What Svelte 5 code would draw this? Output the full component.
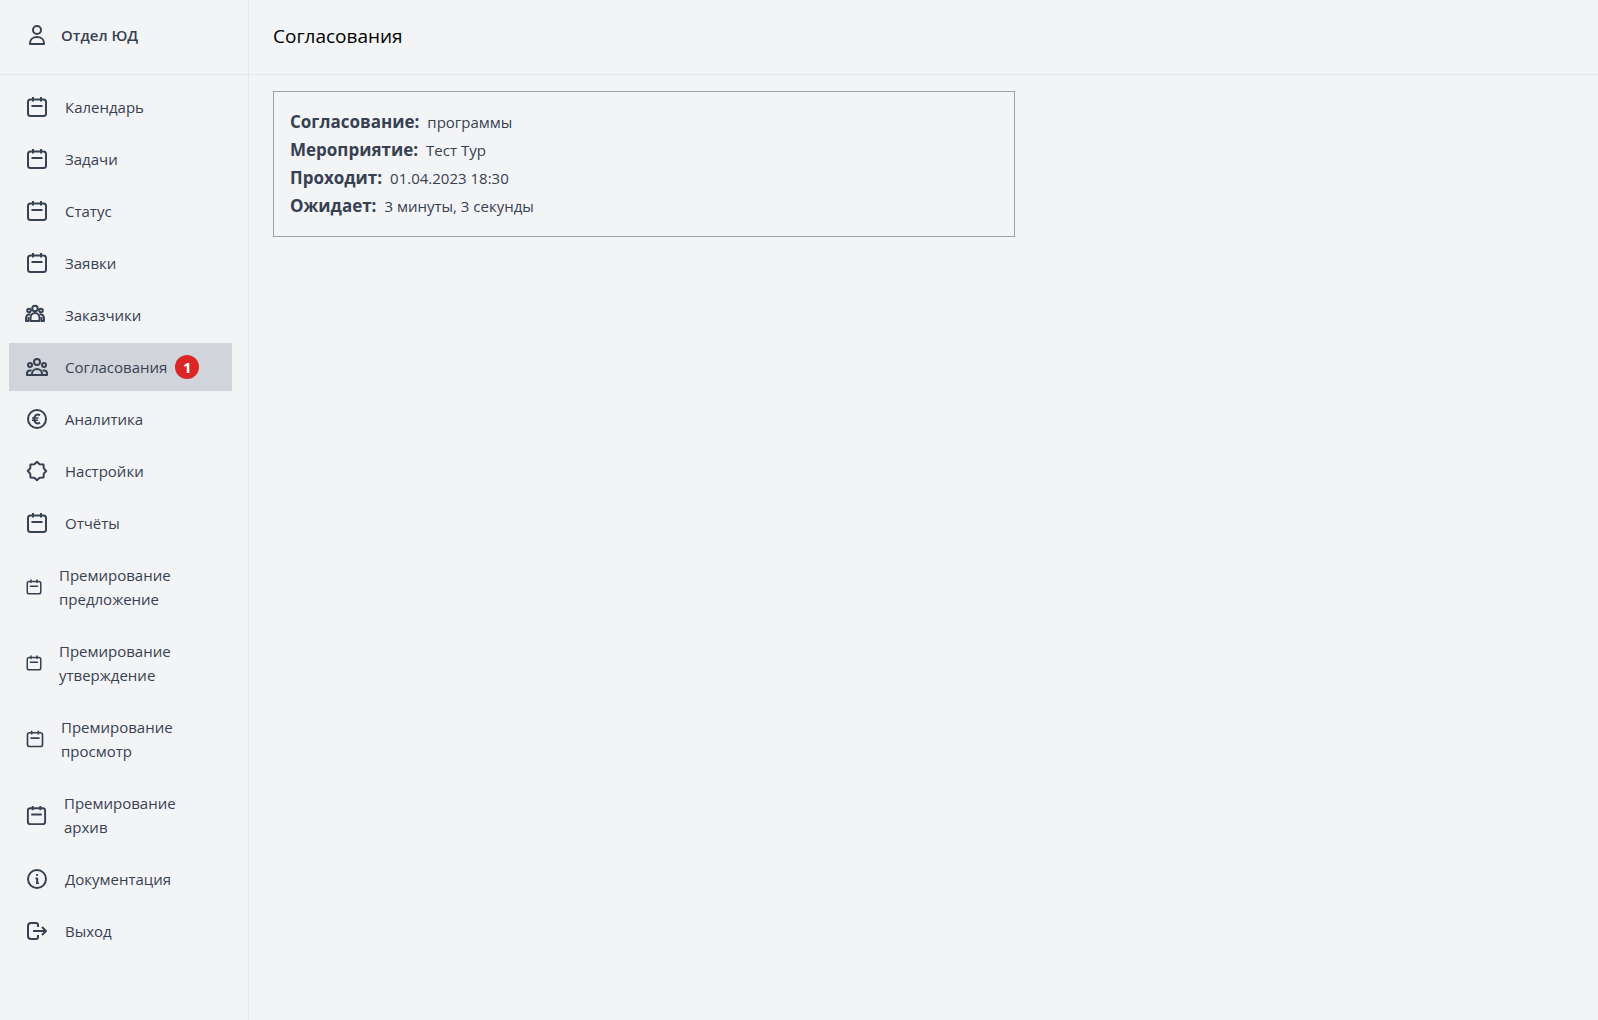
<script lang="ts">
	type MenuItem = {
		title: string;
		icon: string;
		size?: number;
		count?: number;
	};

	let user = 'Отдел ЮД';
	let active = 'Согласования';

	let menu: MenuItem[] = [
		{ title: 'Календарь', icon: 'calendar' },
		{ title: 'Задачи', icon: 'calendar' },
		{ title: 'Статус', icon: 'calendar' },
		{ title: 'Заявки', icon: 'calendar' },
		{ title: 'Заказчики', icon: 'clients' },
		{ title: 'Согласования', icon: 'group', count: 1 },
		{ title: 'Аналитика', icon: 'euro' },
		{ title: 'Настройки', icon: 'settings' },
		{ title: 'Отчёты', icon: 'calendar' },
		{ title: 'Премирование предложение', icon: 'calendar', size: 18 },
		{ title: 'Премирование утверждение', icon: 'calendar', size: 18 },
		{ title: 'Премирование просмотр', icon: 'calendar', size: 20 },
		{ title: 'Премирование архив', icon: 'calendar', size: 23 },
		{ title: 'Документация', icon: 'info' },
		{ title: 'Выход', icon: 'logout' }
	];

	let approval = [
		{ label: 'Согласование:', value: 'программы' },
		{ label: 'Мероприятие:', value: 'Тест Тур' },
		{ label: 'Проходит:', value: '01.04.2023 18:30' },
		{ label: 'Ожидает:', value: '3 минуты, 3 секунды' }
	];
</script>

<div class="layout">
	<aside>
		<div class="user">
			<svg class="icon" width="24" height="24" viewBox="0 0 24 24">
				<circle cx="12" cy="7" r="4" />
				<path d="M5 21v-1c0-3.500 3-6 7-6s7 2.500 7 6v1z" />
			</svg>
			<span>{user}</span>
		</div>
		<nav>
			{#each menu as item}
				<a href="#{item.icon}" class:active={item.title === active}>
					<svg class="icon" width={item.size ?? 24} height={item.size ?? 24} viewBox="0 0 24 24">
						{#if item.icon === 'calendar'}
							<rect x="3" y="4.500" width="18" height="16.500" rx="2.500" />
							<path d="M8 2v4.500M16 2v4.500M6.500 11h11" />
						{:else if item.icon === 'clients'}
							<circle cx="10" cy="5.500" r="2.800" />
							<circle cx="4" cy="7.500" r="1.800" />
							<circle cx="16" cy="7.500" r="1.800" />
							<path d="M5.500 18v-3c0-3 2-5 4.500-5s4.500 2 4.500 5v3z" />
							<path d="M5.500 11.200c-3 0-4.500 1.800-4.500 4.300v2.500h2.500v-4M14.500 11.200c3 0 4.500 1.800 4.500 4.300v2.500h-2.500v-4" />
						{:else if item.icon === 'group'}
							<circle cx="12" cy="7" r="3" />
							<circle cx="5" cy="10" r="2" />
							<circle cx="19" cy="10" r="2" />
							<path d="M7 20v-1a5 5 0 0 1 10 0v1z" />
							<path d="M6.500 15.500H5a3 3 0 0 0-3 3V20h5M17.500 15.500H19a3 3 0 0 1 3 3V20h-5" />
						{:else if item.icon === 'euro'}
							<circle cx="12" cy="12" r="9" />
							<path d="M15 8.300c-3.200-1.900-5.800.3-5.800 3.700s2.600 5.600 5.800 3.700" />
							<path class="thin" d="M7 10.900h6.500M7 13.300h6" />
						{:else if item.icon === 'settings'}
							<path
								d="M12 2.800l2.600 2.400 3.900 0.300 0.300 3.900 2.400 2.600-2.400 2.600-0.300 3.900-3.900 0.300-2.600 2.400-2.600-2.400-3.900-0.300-0.300-3.900-2.400-2.600 2.400-2.600 0.300-3.900 3.900-0.300z"
							/>
						{:else if item.icon === 'info'}
							<circle cx="12" cy="12" r="9" />
							<path d="M12 7v1.800" />
							<path d="M10.500 11.500H12.200V16" />
							<path class="thin" d="M11 16.200h3" />
						{:else}
							<path
								d="M13 8V6a2 2 0 0 0-2-2H6a3 3 0 0 0-3 3v10a3 3 0 0 0 3 3h5a2 2 0 0 0 2-2v-2M8 12h13M17 8l4 4-4 4"
							/>
						{/if}
					</svg>
					<span class="title">{item.title}</span>
					{#if item.count}
						<span class="count">{item.count}</span>
					{/if}
				</a>
			{/each}
		</nav>
	</aside>

	<main>
		<header>
			<h1>{active}</h1>
		</header>
		<section>
			<dl class="card">
				{#each approval as row}
					<div class="row">
						<dt>{row.label}</dt>
						<dd>{row.value}</dd>
					</div>
				{/each}
			</dl>
		</section>
	</main>
</div>

<style>
	:global(body) {
		background-color: #f3f4f6;
	}

	.layout {
		display: flex;
		min-height: 100vh;
		font-family: 'Segoe UI', 'Open Sans', 'Noto Sans', sans-serif;
		font-size: 15px;
		line-height: 24px;
		color: #374151;
	}

	aside {
		box-sizing: border-box;
		flex: none;
		width: 249px;
		border-right: 1px solid #e5e7eb;
	}

	.user,
	header {
		box-sizing: border-box;
		display: flex;
		align-items: center;
		height: 75px;
		border-bottom: 1px solid #e5e7eb;
	}

	.user {
		gap: 12px;
		padding: 0 25px 4px;
		font-weight: 600;
	}

	header {
		padding: 0 24px 2px;
	}

	.icon {
		flex: none;
		fill: none;
		stroke: currentColor;
		stroke-width: 2;
		stroke-linejoin: round;
	}

	.thin {
		stroke-width: 1.5;
	}

	nav {
		display: flex;
		flex-direction: column;
		gap: 4px;
		padding: 8px 16px 8px 9px;
	}

	nav a {
		display: flex;
		align-items: center;
		padding: 12px 16px;
		color: inherit;
		text-decoration: none;
	}

	nav a:hover,
	nav a.active {
		background-color: #d1d5db;
	}

	.title {
		margin-left: 16px;
	}

	.count {
		width: 24px;
		margin-left: 8px;
		border-radius: 50%;
		background-color: #dc2626;
		color: white;
		font-weight: 700;
		text-align: center;
	}

	main {
		flex: 1;
	}

	h1 {
		margin: 0;
		font-size: 19px;
		font-weight: 400;
		line-height: 28px;
		color: black;
	}

	section {
		padding: 16px 24px;
	}

	.card {
		box-sizing: border-box;
		width: 57%;
		margin: 0;
		padding: 16px;
		border: 1px solid #9ca3af;
	}

	.row {
		display: flex;
		align-items: center;
		gap: 8px;
		line-height: 28px;
	}

	dt {
		font-size: 17px;
		font-weight: 700;
	}

	dd {
		margin: 0;
	}
</style>
